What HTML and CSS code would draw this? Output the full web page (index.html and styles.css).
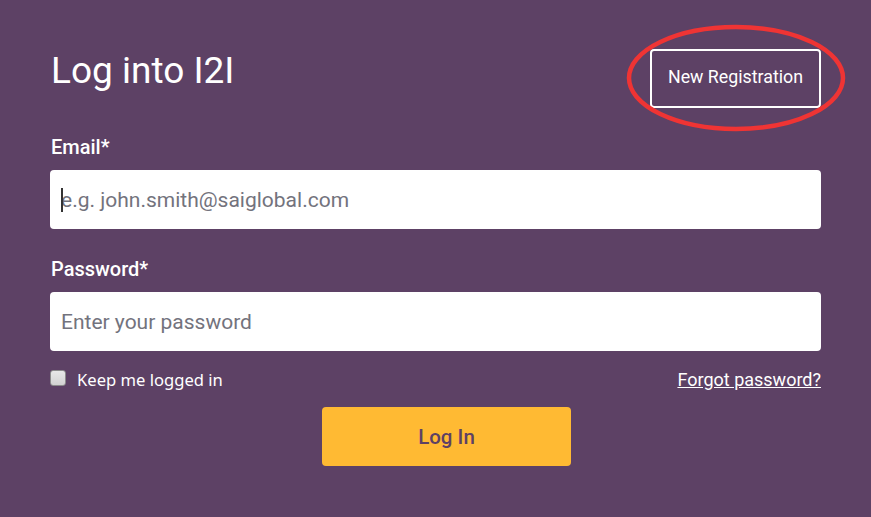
FILE: index.html
```html
<!DOCTYPE html>
<html>
<head>
<meta charset="utf-8">
<link rel="stylesheet" href="styles.css">
</head>
<body>
<div class="card">
  <div class="head">
    <h1 class="title">Log into I2I</h1>
    <div class="reg-wrap">
      <button class="reg">New Registration</button>
      <svg class="circle" width="222" height="110" viewBox="0 0 222 110"><ellipse cx="111" cy="55" rx="107" ry="51" fill="none" stroke="#ef3434" stroke-width="4.5"/></svg>
    </div>
  </div>
  <label class="label">Email*</label>
  <div class="input"><span class="caret"></span><span class="ph">e.g. john.smith@saiglobal.com</span></div>
  <label class="label">Password*</label>
  <div class="input"><span class="ph">Enter your password</span></div>
  <div class="row">
    <label class="keep"><span class="box"></span>Keep me logged in</label>
    <a class="forgot" href="#">Forgot password?</a>
  </div>
  <div class="actions"><button class="login">Log In</button></div>
</div>
</body>
</html>
```
FILE: styles.css
```css
html, body {
  margin: 0;
  height: 100%;
  background: #5d4165;
}
body {
  font-family: Roboto, "Liberation Sans", sans-serif;
  color: #fff;
}
.card {
  padding: 0 50px 0 50px;
  width: 771px;
}
.head {
  display: flex;
  justify-content: space-between;
  align-items: flex-start;
  padding-top: 49px;
  height: 86px;
}
.title {
  margin: 0;
  font-weight: 400;
  font-size: 37px;
  line-height: 44px;
  margin-left: 1px;
}
.reg-wrap {
  position: relative;
}
.reg {
  width: 171px;
  height: 59px;
  background: transparent;
  border: 2px solid #fff;
  border-radius: 4px;
  color: #fff;
  font-family: inherit;
  font-size: 17.8px;
  padding: 0 0 4px 0;
  margin-top: 0;
}
.circle {
  position: absolute;
  left: -25px;
  top: -26px;
}
.label {
  display: block;
  font-size: 20px;
  line-height: 24px;
  font-weight: 500;
  margin-left: 1px;
  height: 35px;
}
.input {
  height: 59px;
  background: #fff;
  border-radius: 4px;
  display: flex;
  align-items: center;
  padding-left: 11px;
  margin-bottom: 28px;
  position: relative;
}
.caret {
  position: absolute;
  left: 11px;
  top: 18px;
  width: 2px;
  height: 24px;
  background: #333;
}
.ph {
  color: #73737d;
  font-size: 21px;
}
.row {
  display: flex;
  justify-content: space-between;
  align-items: center;
  margin-top: -19px;
  height: 38px;
}
.keep {
  display: flex;
  align-items: center;
  font-size: 16.6px;
  font-family: "Noto Sans", "Open Sans", sans-serif;
}
.box {
  width: 14px;
  height: 14px;
  border: 1px solid #8c8c8c;
  border-radius: 3px;
  background: linear-gradient(#e8e8e8, #d2d2d2);
  margin-right: 11px;
  margin-top: -3px;
}
.forgot {
  color: #fff;
  font-size: 18px;
}
.actions {
  display: flex;
  justify-content: center;
  margin-top: 9px;
  padding-left: 22px;
}
.login {
  width: 249px;
  height: 59px;
  background: #ffba33;
  border: none;
  border-radius: 4px;
  color: #5d4165;
  font-family: inherit;
  font-size: 20.5px;
  font-weight: 500;
}
```
